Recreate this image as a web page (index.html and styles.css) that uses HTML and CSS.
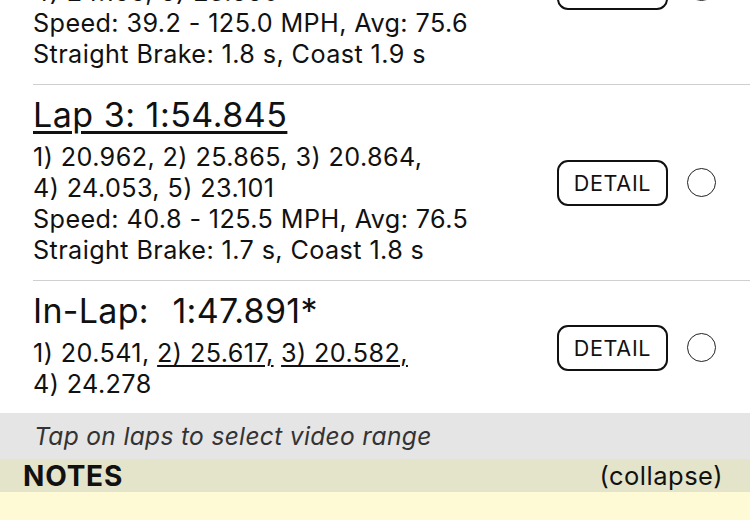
FILE: index.html
```html
<!DOCTYPE html>
<html lang="en">
<head>
<meta charset="utf-8">
<title>Session laps</title>
<link rel="stylesheet" href="styles.css">
</head>
<body>
<div class="screen">
  <div class="laps">
    <section class="lap">
      <div class="lap-info">
        <div class="lap-title"><span class="lap-link">Lap 2: 1:54.960</span></div>
        <div class="line">1) 20.874, 2) 25.912, 3) 20.801,</div>
        <div class="line">4) 24.166, 5) 23.550</div>
        <div class="line">Speed: 39.2 - 125.0 MPH, Avg: 75.6</div>
        <div class="line">Straight Brake: 1.8 s, Coast 1.9 s</div>
      </div>
      <div class="lap-actions">
        <button class="detail-btn">DETAIL</button>
        <span class="select-dot"></span>
      </div>
    </section>

    <section class="lap">
      <div class="lap-info">
        <div class="lap-title"><span class="lap-link">Lap 3: 1:54.845</span></div>
        <div class="line">1) 20.962, 2) 25.865, 3) 20.864,</div>
        <div class="line">4) 24.053, 5) 23.101</div>
        <div class="line">Speed: 40.8 - 125.5 MPH, Avg: 76.5</div>
        <div class="line">Straight Brake: 1.7 s, Coast 1.8 s</div>
      </div>
      <div class="lap-actions">
        <button class="detail-btn">DETAIL</button>
        <span class="select-dot"></span>
      </div>
    </section>

    <section class="lap">
      <div class="lap-info">
        <div class="lap-title lap-title-plain">In-Lap:   1:47.891*</div>
        <div class="line">1) 20.541, <span class="best">2) 25.617,</span> <span class="best">3) 20.582,</span></div>
        <div class="line">4) 24.278</div>
      </div>
      <div class="lap-actions">
        <button class="detail-btn">DETAIL</button>
        <span class="select-dot"></span>
      </div>
    </section>
  </div>

  <div class="hint">Tap on laps to select video range</div>

  <div class="notes-head">
    <span class="notes-title">NOTES</span>
    <span class="notes-toggle">(collapse)</span>
  </div>
  <div class="notes-body"></div>
</div>
</body>
</html>
```

FILE: styles.css
```css
* {
  box-sizing: border-box;
}

html, body {
  margin: 0;
  padding: 0;
  background: #ffffff;
}

body {
  font-family: Inter, "Liberation Sans", Arial, sans-serif;
  color: #111111;
  width: 750px;
  height: 520px;
  overflow: hidden;
}

.screen {
  display: flex;
  flex-direction: column;
  height: 520px;
}

/* list is scrolled so the previous lap is mostly out of view */
.laps {
  margin-top: -111px;
  display: flex;
  flex-direction: column;
}

.lap {
  display: flex;
  align-items: center;
  margin-left: 33px;
  padding: 10px 34px 14px 0;
  border-bottom: 1px solid #cfcfcf;
}

.lap:last-child {
  border-bottom: none;
  padding-bottom: 13px;
}

.lap-info {
  flex: 1;
  display: flex;
  flex-direction: column;
}

.lap-title {
  font-size: 34px;
  line-height: 40px;
  margin-bottom: 7px;
  white-space: pre;
  letter-spacing: 0.5px;
}

.lap-title-plain {
  word-spacing: -2px;
  letter-spacing: 0.3px;
}

.lap-link {
  text-decoration: underline;
  text-decoration-thickness: 3px;
  text-underline-offset: 4px;
}

.line {
  font-size: 25.2px;
  line-height: 31px;
  white-space: nowrap;
  letter-spacing: 0.4px;
}

.best {
  text-decoration: underline;
  text-decoration-thickness: 1.5px;
  text-underline-offset: 3px;
}

.lap-actions {
  display: flex;
  align-items: center;
  gap: 19px;
  margin-top: 4px;
}

.detail-btn {
  width: 111px;
  height: 46px;
  border: 2px solid #111111;
  border-radius: 11px;
  background: #ffffff;
  font-family: Inter, "Liberation Sans", Arial, sans-serif;
  font-size: 21.5px;
  letter-spacing: 0.7px;
  color: #111111;
  padding: 0;
}

.select-dot {
  width: 29px;
  height: 29px;
  border: 1.5px solid #222222;
  border-radius: 50%;
}

.hint {
  height: 46px;
  background: #e5e5e5;
  padding-left: 34px;
  font-size: 24.5px;
  font-style: italic;
  line-height: 46px;
  color: #333333;
  letter-spacing: 0.35px;
}

.notes-head {
  height: 33px;
  background: #e4e4ca;
  display: flex;
  align-items: center;
  justify-content: space-between;
  padding: 0 27px 0 23px;
}

.notes-title {
  font-size: 28px;
  font-weight: 700;
  letter-spacing: 0.8px;
}

.notes-toggle {
  font-size: 25.5px;
  letter-spacing: 0.5px;
}

.notes-body {
  flex: 1;
  background: #fefad5;
}
```
